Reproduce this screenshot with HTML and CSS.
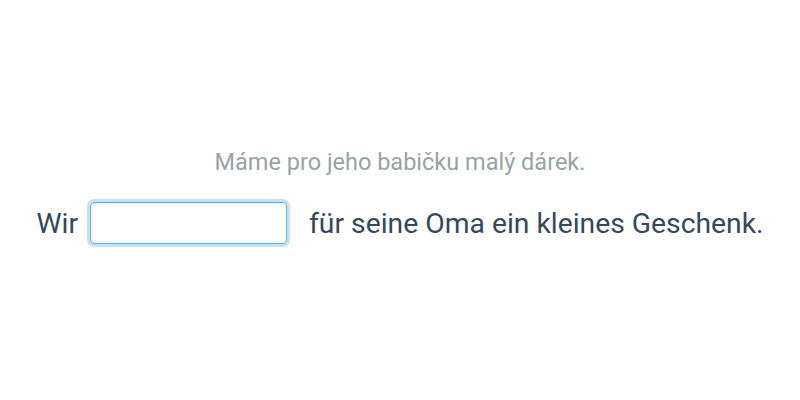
FILE: index.html
```html
<!DOCTYPE html>
<html lang="de">
<head>
<meta charset="utf-8">
<title>Lückentext</title>
<link rel="stylesheet" href="styles.css">
</head>
<body>
<main class="exercise">
  <p class="hint">Máme pro jeho babičku malý dárek.</p>
  <div class="sentence">
    <span class="word">Wir</span>
    <input class="gap" type="text" aria-label="Lücke">
    <span class="word">für seine Oma ein kleines Geschenk.</span>
  </div>
</main>
</body>
</html>
```
FILE: styles.css
```css
html, body {
  margin: 0;
  padding: 0;
  background: #ffffff;
}
body {
  font-family: Roboto, "Noto Sans", sans-serif;
}
.exercise {
  box-sizing: border-box;
  height: 400px;
  padding-bottom: 8px;
  display: flex;
  flex-direction: column;
  align-items: center;
  justify-content: center;
}
.hint {
  margin: 0 0 26px 0;
  font-size: 23.5px;
  line-height: 28px;
  color: #95a5a6;
}
.sentence {
  display: flex;
  align-items: center;
  font-size: 28.3px;
  color: #34495e;
}
.gap {
  box-sizing: border-box;
  width: 197px;
  height: 42px;
  margin: 0 22px 0 12px;
  border: 1px solid #5dade2;
  border-radius: 4px;
  box-shadow: 0 0 0 3px rgba(93, 173, 226, 0.35);
  outline: none;
  font-family: inherit;
  font-size: 24px;
  padding: 0 8px;
}
```
